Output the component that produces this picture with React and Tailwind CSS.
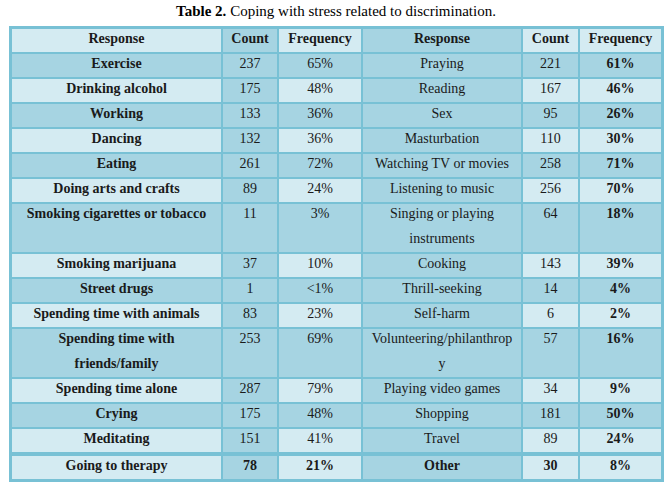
import React from 'react';

const rows = [
  ['Exercise', '237', '65%', 'Praying', '221', '61%'],
  ['Drinking alcohol', '175', '48%', 'Reading', '167', '46%'],
  ['Working', '133', '36%', 'Sex', '95', '26%'],
  ['Dancing', '132', '36%', 'Masturbation', '110', '30%'],
  ['Eating', '261', '72%', 'Watching TV or movies', '258', '71%'],
  ['Doing arts and crafts', '89', '24%', 'Listening to music', '256', '70%'],
  ['Smoking cigarettes or tobacco', '11', '3%', ['Singing or playing', 'instruments'], '64', '18%'],
  ['Smoking marijuana', '37', '10%', 'Cooking', '143', '39%'],
  ['Street drugs', '1', '<1%', 'Thrill-seeking', '14', '4%'],
  ['Spending time with animals', '83', '23%', 'Self-harm', '6', '2%'],
  [['Spending time with', 'friends/family'], '253', '69%', ['Volunteering/philanthrop', 'y'], '57', '16%'],
  ['Spending time alone', '287', '79%', 'Playing video games', '34', '9%'],
  ['Crying', '175', '48%', 'Shopping', '181', '50%'],
  ['Meditating', '151', '41%', 'Travel', '89', '24%'],
];

const LIGHT = 'bg-[#d4ebf2]';
const DARK = 'bg-[#a6d4e2]';
const gridCols = 'grid grid-cols-[209px_54px_82px_158px_55px_81px] gap-x-[2px]';

const Cell = ({ value, bold, shade }) => {
  const lines = Array.isArray(value) ? value : [value];
  return (
    <div className={`${shade} text-center ${bold ? 'font-bold' : ''}`}>
      <div className="-mt-[3px] leading-[25px]">
        {lines.map((l, i) => (
          <div key={i} className="whitespace-nowrap">{l}</div>
        ))}
      </div>
    </div>
  );
};

const Row = ({ cells, light, bolds, double, extraClass = '' }) => {
  const shade = light ? LIGHT : DARK;
  return (
    <div className={`${gridCols} ${double ? 'h-[48px]' : 'h-[23px]'} ${extraClass}`}>
      {cells.map((c, i) => (
        <Cell key={i} value={c} bold={bolds[i]} shade={i === 1 || i === 3 ? DARK : shade} />
      ))}
    </div>
  );
};

export default function App() {
  return (
    <div className="w-[672px] h-[488px] bg-white text-[#1a1a1a] text-[14px]" style={{ fontFamily: '"Liberation Serif", "Times New Roman", serif' }}>
      <div className="h-[26px] pt-[1px] text-center text-[15px] leading-5 text-black">
        <span className="font-bold">Table 2.</span> Coping with stress related to discrimination.
      </div>
      <div className="ml-[9px] w-fit bg-[#78c1d5] p-[3px] flex flex-col gap-y-[2px]">
        <Row
          cells={['Response', 'Count', 'Frequency', 'Response', 'Count', 'Frequency']}
          light
          bolds={[true, true, true, true, true, true]}
        />
        {rows.map((r, i) => (
          <Row
            key={i}
            cells={r}
            light={i % 2 === 1}
            double={Array.isArray(r[0]) || Array.isArray(r[3])}
            bolds={[true, false, false, false, false, true]}
          />
        ))}
        <Row
          cells={['Going to therapy', '78', '21%', 'Other', '30', '8%']}
          light
          extraClass="mt-[2px]"
          bolds={[true, true, true, true, true, true]}
        />
      </div>
    </div>
  );
}
